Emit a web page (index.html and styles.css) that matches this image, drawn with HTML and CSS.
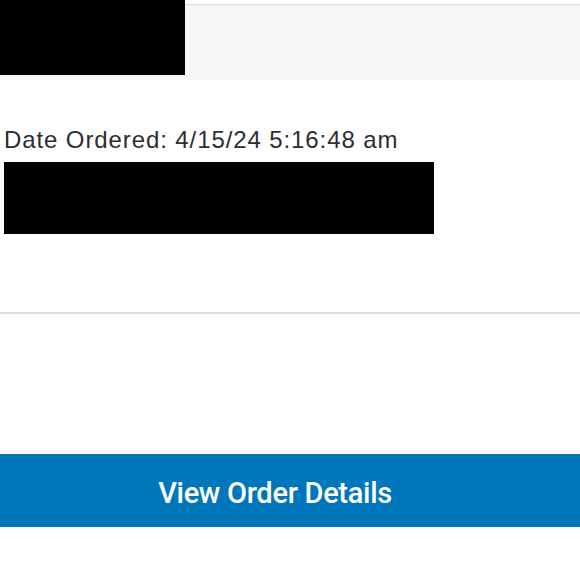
FILE: index.html
```html
<!DOCTYPE html>
<html>
<head>
<meta charset="utf-8">
<link rel="stylesheet" href="styles.css">
</head>
<body>
<div class="header">
  <div class="redact redact-logo"></div>
</div>
<div class="order">
  <div class="date">Date Ordered: 4/15/24 5:16:48 am</div>
  <div class="redact redact-info"></div>
</div>
<div class="divider"></div>
<div class="actions">
  <button class="btn">View Order Details</button>
</div>
</body>
</html>
```
FILE: styles.css
```css
html, body {
  margin: 0;
  padding: 0;
  background: #ffffff;
}
body {
  width: 580px;
  height: 580px;
  overflow: hidden;
  font-family: "Liberation Sans", Arial, sans-serif;
  color: #2d2d33;
}
.header {
  position: relative;
  margin-top: 4px;
  height: 75px;
  border-top: 1px solid #dcdce4;
  background: #f6f6f9;
}
.redact {
  background: #000;
}
.redact-logo {
  position: absolute;
  left: 0;
  top: -5px;
  width: 185px;
  height: 75px;
}
.order {
  padding: 46px 0 0 4px;
}
.date {
  font-size: 24px;
  line-height: 28px;
  letter-spacing: 0.9px;
}
.redact-info {
  margin-top: 8px;
  width: 430px;
  height: 72px;
}
.divider {
  margin-top: 78px;
  height: 2px;
  background: #dadddd;
}
.actions {
  padding-top: 140px;
}
.btn {
  display: block;
  width: 100%;
  height: 73px;
  border: 0;
  margin: 0;
  padding: 4px 30px 0 0;
  background: #0077bb;
  color: #ffffff;
  font-family: Roboto, "Liberation Sans", Arial, sans-serif;
  font-size: 29px;
  font-weight: 500;
  letter-spacing: -0.3px;
  text-align: center;
}
```
